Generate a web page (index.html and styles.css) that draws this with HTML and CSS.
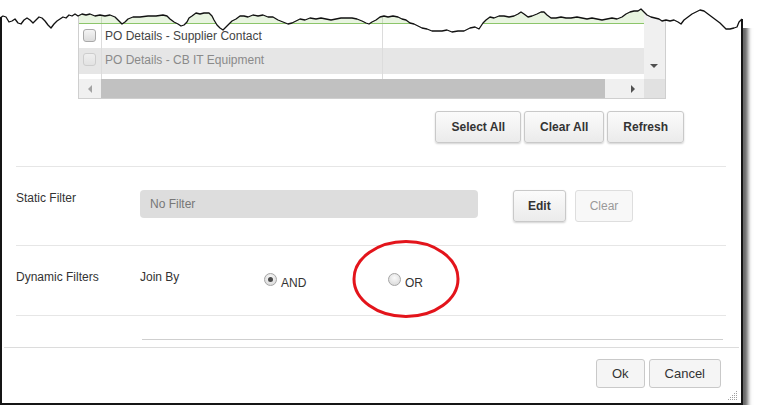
FILE: index.html
```html
<!DOCTYPE html>
<html lang="en">
<head>
    <meta charset="UTF-8">
    <title>Report Filters</title>
    <link rel="stylesheet" href="styles.css">
</head>
<body>
    <div class="dialog">
        <div class="dialog-body">
            <div class="grid">
                <div class="grid-main">
                    <div class="grid-table">
                        <div class="grid-row grid-head">
                            <div class="cell"></div><div class="cell"></div><div class="cell"></div>
                        </div>
                        <div class="grid-row">
                            <div class="cell"><span class="check"></span></div>
                            <div class="cell text">PO Details - Supplier Contact</div>
                            <div class="cell"></div>
                        </div>
                        <div class="grid-row alt">
                            <div class="cell"><span class="check disabled"></span></div>
                            <div class="cell text">PO Details - CB IT Equipment</div>
                            <div class="cell"></div>
                        </div>
                        <div class="grid-row spacer">
                            <div class="cell"></div><div class="cell"></div><div class="cell"></div>
                        </div>
                    </div>
                    <div class="vscroll"><span class="arrow-down"></span></div>
                </div>
                <div class="hscroll">
                    <div class="hs-track">
                        <span class="hs-left"><span class="arrow-left"></span></span>
                        <span class="hs-thumb"></span>
                        <span class="hs-right"><span class="arrow-right"></span></span>
                    </div>
                    <div class="hs-corner"></div>
                </div>
            </div>

            <div class="actions">
                <button class="btn">Select All</button>
                <button class="btn">Clear All</button>
                <button class="btn">Refresh</button>
            </div>

            <div class="section static">
                <div class="label">Static Filter</div>
                <div class="filter-input">No Filter</div>
                <button class="btn edit">Edit</button>
                <button class="btn clear" disabled>Clear</button>
            </div>

            <div class="section dynamic">
                <div class="label">Dynamic Filters</div>
                <div class="label">Join By</div>
                <label class="option"><span class="radio checked"></span><span class="option-text">AND</span></label>
                <label class="option"><span class="radio"></span><span class="option-text">OR</span></label>
            </div>

            <div class="section tail"></div>
            <div class="rule"></div>
        </div>

        <div class="footer">
            <button class="btn plain">Ok</button>
            <button class="btn plain">Cancel</button>
        </div>

        <!-- resize grip -->
        <svg class="grip" width="10" height="10" viewBox="0 0 10 10">
            <g fill="#a0a0a0">
                <rect x="8" y="0" width="1" height="1"/>
                <rect x="6" y="2" width="1" height="1"/><rect x="8" y="2" width="1" height="1"/>
                <rect x="4" y="4" width="1" height="1"/><rect x="6" y="4" width="1" height="1"/><rect x="8" y="4" width="1" height="1"/>
                <rect x="2" y="6" width="1" height="1"/><rect x="4" y="6" width="1" height="1"/><rect x="6" y="6" width="1" height="1"/><rect x="8" y="6" width="1" height="1"/>
                <rect x="0" y="8" width="1" height="1"/><rect x="2" y="8" width="1" height="1"/><rect x="4" y="8" width="1" height="1"/><rect x="6" y="8" width="1" height="1"/><rect x="8" y="8" width="1" height="1"/>
            </g>
        </svg>

        <!-- highlight round the OR option -->
        <svg class="highlight" width="110" height="82" viewBox="0 0 110 82">
            <ellipse cx="54" cy="39" rx="52" ry="37.5" fill="none" stroke="#e3141b" stroke-width="3"/>
        </svg>
    </div>

    <!-- torn top edge of the screenshot -->
    <svg class="torn" width="757" height="40" viewBox="0 0 757 40">
        <polygon fill="#fff" points="0,0 0,18 3,16 6,17 9,22 12,21 15,19 18,23 21,24 24,20 27,18 30,20 33,23 36,20 39,17 42,18 45,21 48,25 51,28 54,24 57,21 60,19 63,17 66,18 69,15 72,16 75,14 78,16 82,14 86,15 90,14 95,16 100,15 105,16 110,15 115,17 119,21 122,24 125,22 128,19 133,17 140,17 148,16 156,16 163,15 167,16 170,19 174,22 178,24 181,26 184,25 187,22 189,18 192,16 196,13 200,14 204,13 209,13 212,16 214,20 217,25 220,28 223,30 226,27 229,24 232,21 236,19 240,16 244,16 248,17 253,15 258,16 263,15 268,17 273,17 278,20 283,22 288,24 292,23 296,21 300,19 305,20 310,18 316,19 321,18 326,19 331,20 336,19 341,18 346,18 352,18 357,19 362,21 366,23 369,24 372,22 376,20 380,17 384,16 388,17 393,16 398,17 402,19 406,20 410,23 414,24 418,26 422,28 427,29 432,31 437,31 442,31 447,30 452,32 458,31 464,31 470,28 475,27 479,29 483,23 486,20 490,17 494,18 499,16 504,16 509,17 514,16 518,14 521,12 524,14 528,17 532,16 537,14 541,12 544,12 547,15 551,18 556,18 561,17 566,18 571,18 577,17 582,18 587,19 592,18 597,19 602,20 607,19 612,18 617,19 622,17 626,14 630,12 634,11 638,11 641,9 644,12 647,15 651,17 655,18 659,19 662,21 666,20 670,21 674,20 678,22 681,24 684,20 688,17 692,14 696,12 700,10 704,11 708,14 712,17 716,20 720,23 723,26 726,29 730,29 734,28 737,27 739,22 742,19 743,19 743,28 757,28 757,0"/>
        <polyline fill="none" stroke="#111" stroke-width="1.3" stroke-linejoin="round" points="0,18 3,16 6,17 9,22 12,21 15,19 18,23 21,24 24,20 27,18 30,20 33,23 36,20 39,17 42,18 45,21 48,25 51,28 54,24 57,21 60,19 63,17 66,18 69,15 72,16 75,14 78,16 82,14 86,15 90,14 95,16 100,15 105,16 110,15 115,17 119,21 122,24 125,22 128,19 133,17 140,17 148,16 156,16 163,15 167,16 170,19 174,22 178,24 181,26 184,25 187,22 189,18 192,16 196,13 200,14 204,13 209,13 212,16 214,20 217,25 220,28 223,30 226,27 229,24 232,21 236,19 240,16 244,16 248,17 253,15 258,16 263,15 268,17 273,17 278,20 283,22 288,24 292,23 296,21 300,19 305,20 310,18 316,19 321,18 326,19 331,20 336,19 341,18 346,18 352,18 357,19 362,21 366,23 369,24 372,22 376,20 380,17 384,16 388,17 393,16 398,17 402,19 406,20 410,23 414,24 418,26 422,28 427,29 432,31 437,31 442,31 447,30 452,32 458,31 464,31 470,28 475,27 479,29 483,23 486,20 490,17 494,18 499,16 504,16 509,17 514,16 518,14 521,12 524,14 528,17 532,16 537,14 541,12 544,12 547,15 551,18 556,18 561,17 566,18 571,18 577,17 582,18 587,19 592,18 597,19 602,20 607,19 612,18 617,19 622,17 626,14 630,12 634,11 638,11 641,9 644,12 647,15 651,17 655,18 659,19 662,21 666,20 670,21 674,20 678,22 681,24 684,20 688,17 692,14 696,12 700,10 704,11 708,14 712,17 716,20 720,23 723,26 726,29 730,29 734,28 737,27 739,22 742,19"/>
    </svg>
</body>
</html>
```

FILE: styles.css
```css
/* Basic reset */
* {
    box-sizing: border-box;
}

body {
    margin: 0;
    font-family: 'Liberation Sans', Arial, sans-serif;
    font-size: 12px;
    color: #333;
    background: #fff;
    position: relative;
}

.dialog {
    position: relative;
    width: 743px;
    height: 405px;
    border: 2px solid #151515;
    border-top: 0;
    background: #fff;
    box-shadow: 5px 5px 4px rgba(0, 0, 0, 0.6);
    display: flex;
    flex-direction: column;
}

.dialog-body {
    flex: 1;
    padding: 0 15px 0 14px;
}

/* Report list */
.grid {
    margin-left: 62px;
    width: 588px;
    border: 1px solid #cfcfcf;
    border-top: 0;
}

.grid-main {
    display: flex;
}

.grid-table {
    width: 565px;
}

.grid-row {
    display: grid;
    grid-template-columns: 23px 281px 1fr;
    height: 24px;
    line-height: 24px;
}

.grid-row .cell:nth-child(1),
.grid-row .cell:nth-child(2) {
    border-right: 1px solid #dcdcdc;
}

.grid-head {
    height: 24px;
    background: #e8f4e0;
    border-bottom: 1px solid #8cc56a;
}

.grid-head .cell:nth-child(1),
.grid-head .cell:nth-child(2) {
    border-right-color: #c9d9c0;
}

.grid-row.alt {
    height: 26px;
    background: #e6e6e6;
    color: #8a8a8a;
}

.grid-row.spacer {
    height: 5px;
}

.cell.text {
    padding-left: 3px;
    white-space: nowrap;
    color: #444;
}

.grid-row.alt .cell.text {
    color: #8a8a8a;
}

.check {
    display: block;
    width: 13px;
    height: 13px;
    margin: 5px 0 0 4px;
    border: 1px solid #a9a9a9;
    border-radius: 3px;
    background: linear-gradient(#f4f4f4, #dcdcdc);
}

.check.disabled {
    border-color: #cdcdcd;
    background: linear-gradient(#efefef, #e2e2e2);
}

.vscroll {
    width: 21px;
    background: #f0f0f0;
    position: relative;
}

.arrow-down {
    position: absolute;
    left: 6px;
    bottom: 11px;
    border-left: 4px solid transparent;
    border-right: 4px solid transparent;
    border-top: 4px solid #505050;
}

.hscroll {
    display: flex;
    height: 19px;
}

.hs-track {
    width: 565px;
    display: flex;
    background: #f0f0f0;
}

.hs-left {
    width: 22px;
    display: flex;
    align-items: center;
    justify-content: center;
}

.hs-thumb {
    width: 504px;
    background: #c1c1c1;
}

.hs-right {
    flex: 1;
    display: flex;
    align-items: center;
    justify-content: flex-end;
    padding-right: 9px;
}

.arrow-left {
    border-top: 4px solid transparent;
    border-bottom: 4px solid transparent;
    border-right: 4px solid #a3a3a3;
}

.arrow-right {
    border-top: 4px solid transparent;
    border-bottom: 4px solid transparent;
    border-left: 4px solid #505050;
}

.hs-corner {
    flex: 1;
    background: #e1e1e1;
}

/* Buttons */
.btn {
    height: 32px;
    padding: 0 15px;
    border: 1px solid #c9c9c9;
    border-radius: 3px;
    background: linear-gradient(#fbfbfb, #ebebeb);
    box-shadow: 0 1px 2px rgba(0, 0, 0, 0.18);
    font-family: 'Liberation Sans', Arial, sans-serif;
    font-size: 12px;
    font-weight: bold;
    color: #333;
}

.btn:disabled {
    background: #f8f8f8;
    border-color: #dedede;
    box-shadow: none;
    color: #9a9a9a;
    font-weight: normal;
}

.actions {
    display: flex;
    justify-content: flex-end;
    gap: 3px;
    margin: 12px 42px 23px 0;
}

/* Filter rows */
.section {
    display: flex;
    align-items: flex-start;
    border-top: 1px solid #e6e6e6;
    padding-top: 23px;
}

.section.static {
    height: 79px;
}

.section.dynamic {
    height: 70px;
}

.section.tail {
    height: 24px;
}

.label {
    width: 124px;
    line-height: 16px;
}

.filter-input {
    width: 338px;
    height: 28px;
    padding-left: 10px;
    line-height: 28px;
    border-radius: 4px;
    background: #dddddd;
    color: #777;
}

.btn.edit {
    margin-left: 35px;
    padding: 0 14px;
}

.btn.clear {
    margin-left: 9px;
    padding: 0 14px;
}

.option {
    width: 124px;
    display: flex;
    align-items: flex-start;
    margin-top: 4px;
}

.radio {
    width: 13px;
    height: 13px;
    border: 1px solid #a5a5a5;
    border-radius: 50%;
    background: radial-gradient(circle at 50% 35%, #fafafa, #d4d4d4);
    display: flex;
    align-items: center;
    justify-content: center;
}

.radio.checked::after {
    content: "";
    width: 5px;
    height: 5px;
    border-radius: 50%;
    background: #4a4a4a;
}

.option-text {
    margin-left: 4px;
    padding-top: 2px;
    line-height: 16px;
}

.rule {
    margin: 0 3px 0 126px;
    border-top: 1px solid #cfcfcf;
}

/* Footer */
.footer {
    height: 56px;
    margin: 0 2px;
    border-top: 1px solid #dcdcdc;
    display: flex;
    justify-content: flex-end;
    align-items: flex-start;
    gap: 4px;
    padding: 11px 18px 0 0;
}

.btn.plain {
    height: 29px;
    font-size: 13px;
    font-weight: normal;
    background: #f5f5f5;
    box-shadow: none;
    color: #333;
}

.grip {
    position: absolute;
    right: 3px;
    bottom: 2px;
}

.highlight {
    position: absolute;
    left: 350px;
    top: 240px;
}

.torn {
    position: absolute;
    left: 0;
    top: 0;
}
```
